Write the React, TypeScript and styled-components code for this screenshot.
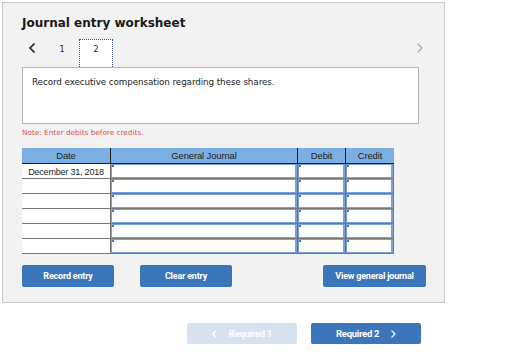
import React from "react";
import styled, { createGlobalStyle } from "styled-components";

const GlobalStyle = createGlobalStyle`
  html, body { margin: 0; padding: 0; background: #ffffff; }
  * { box-sizing: border-box; }
`;

const Page = styled.div`
  padding: 2px 0 0 2px;
  width: 521px;
  height: 364px;
  font-family: "DejaVu Sans", Verdana, sans-serif;
`;

const Panel = styled.div`
  width: 443px;
  height: 301px;
  background: #f2f2f2;
  border: 1px solid #c9c9c9;
  padding: 0 0 0 19px;
  display: flex;
  flex-direction: column;
`;

const Title = styled.h1`
  margin: 12px 0 0 0;
  height: 16px;
  font-size: 12px;
  line-height: 16px;
  font-weight: bold;
  color: #1a1a1a;
`;

const TabsRow = styled.div`
  margin-top: 8px;
  height: 28px;
  display: flex;
  align-items: stretch;
  width: 408px;
`;

const Arrow = styled.div<{ $dim?: boolean }>`
  width: 20px;
  display: flex;
  align-items: flex-start;
  justify-content: center;
  padding-top: 4px;
  color: ${(p) => (p.$dim ? "#a8a8a8" : "#222")};
`;

const Tab = styled.div<{ $active?: boolean; $ml?: number }>`
  width: 34px;
  display: flex;
  justify-content: center;
  padding-top: 5px;
  font-family: "DejaVu Sans", Verdana, sans-serif;
  font-size: 8px;
  color: #222;
  background: ${(p) => (p.$active ? "#ffffff" : "transparent")};
  border: ${(p) => (p.$active ? "1px dotted #37507a" : "1px solid transparent")};
  border-bottom: none;
  margin-left: ${(p) => p.$ml ?? 0}px;
`;

const Spacer = styled.div`
  flex: 1;
`;

const PromptBox = styled.div`
  width: 397px;
  height: 57px;
  background: #ffffff;
  border: 1px solid #b4b4b4;
  padding: 9px 9px;
  font-size: 8.8px;
  color: #222;
  letter-spacing: -0.1px;
`;

const Note = styled.div`
  margin-top: 4px;
  height: 10px;
  font-size: 7.3px;
  line-height: 10px;
  color: #d9534f;
`;

const Table = styled.div`
  margin-top: 10px;
  width: 372px;
  display: flex;
  flex-direction: column;
  font-family: "Liberation Sans", Arial, sans-serif;
  font-size: 9px;
  color: #222;
`;

const HeaderRow = styled.div`
  display: grid;
  grid-template-columns: 88px 187px 48px 49px;
  height: 16px;
  background: #7baee3;
  border-bottom: 1px solid #1e1e1e;
`;

const HeaderCell = styled.div<{ $first?: boolean }>`
  display: flex;
  align-items: center;
  justify-content: center;
  border-left: ${(p) => (p.$first ? "none" : "1px solid #1e1e1e")};
  font-size: 9.5px;
  letter-spacing: -0.15px;
`;

const Row = styled.div`
  display: grid;
  grid-template-columns: 88px 187px 48px 49px;
  height: 15px;
  border-bottom: 1px solid #777777;
`;

const DateCell = styled.div`
  background: #ffffff;
  display: flex;
  align-items: center;
  justify-content: center;
  letter-spacing: -0.2px;
  padding-top: 1px;
`;

const InputCell = styled.div<{ $last?: boolean }>`
  display: flex;
  border-left: 1px solid #6d6d6d;
  border-right: ${(p) => (p.$last ? "1px solid #777777" : "none")};
  background: #777777;
`;

const Field = styled.div`
  flex: 1;
  position: relative;
  background: #ffffff;
  border: 1px solid #7ba2d8;
  border-right-width: 2px;
`;

const Marker = styled.span`
  position: absolute;
  left: 0;
  top: 0;
  width: 2px;
  height: 2px;
  background: #3b7bcc;
`;

const ButtonRow = styled.div`
  margin-top: 11px;
  width: 404px;
  display: flex;
  align-items: center;
`;

const ActionButton = styled.button<{ $w: number; $ml?: number }>`
  width: ${(p) => p.$w}px;
  height: 22px;
  margin-left: ${(p) => p.$ml ?? 0}px;
  border: none;
  border-radius: 2px;
  background: #3a76b9;
  color: #ffffff;
  font-family: Roboto, "Liberation Sans", Arial, sans-serif;
  font-weight: bold;
  font-size: 9px;
  letter-spacing: -0.2px;
  padding: 0 0 1px 0;
  cursor: pointer;
`;

const NavRow = styled.div`
  margin-top: 20px;
  padding-left: 185px;
  display: flex;
  gap: 14px;
`;

const NavButton = styled.button<{ $disabled?: boolean }>`
  width: 110px;
  height: 21px;
  border: none;
  border-radius: 2px;
  background: ${(p) => (p.$disabled ? "#d6e2f0" : "#3a76b9")};
  color: #ffffff;
  font-family: Roboto, "Liberation Sans", Arial, sans-serif;
  font-weight: bold;
  font-size: 9.5px;
  letter-spacing: -0.3px;
  display: flex;
  align-items: center;
  justify-content: center;
  gap: 12px;
  padding: 0;
`;

const Chevron = ({ dir, size = 10, stroke = 1.6 }: { dir: "left" | "right"; size?: number; stroke?: number }) => (
  <svg width={size * 0.6} height={size} viewBox="0 0 6 10" fill="none">
    <path
      d={dir === "left" ? "M5 1 L1 5 L5 9" : "M1 1 L5 5 L1 9"}
      stroke="currentColor"
      strokeWidth={stroke}
      strokeLinecap="round"
      strokeLinejoin="round"
    />
  </svg>
);

const rows = ["December 31, 2018", "", "", "", "", ""];

export default function App() {
  return (
    <Page>
      <GlobalStyle />
      <Panel>
        <Title>Journal entry worksheet</Title>
        <TabsRow>
          <Arrow>
            <Chevron dir="left" size={10} stroke={1.7} />
          </Arrow>
          <Tab $ml={3}>1</Tab>
          <Tab $active>2</Tab>
          <Spacer />
          <Arrow $dim>
            <Chevron dir="right" size={10} stroke={1.1} />
          </Arrow>
        </TabsRow>
        <PromptBox>Record executive compensation regarding these shares.</PromptBox>
        <Note>Note: Enter debits before credits.</Note>
        <Table>
          <HeaderRow>
            <HeaderCell $first>Date</HeaderCell>
            <HeaderCell>General Journal</HeaderCell>
            <HeaderCell>Debit</HeaderCell>
            <HeaderCell>Credit</HeaderCell>
          </HeaderRow>
          {rows.map((d, i) => (
            <Row key={i}>
              <DateCell>{d}</DateCell>
              <InputCell>
                <Field>
                  <Marker />
                </Field>
              </InputCell>
              <InputCell>
                <Field>
                  <Marker />
                </Field>
              </InputCell>
              <InputCell $last>
                <Field>
                  <Marker />
                </Field>
              </InputCell>
            </Row>
          ))}
        </Table>
        <ButtonRow>
          <ActionButton $w={92}>Record entry</ActionButton>
          <ActionButton $w={92} $ml={26}>Clear entry</ActionButton>
          <Spacer />
          <ActionButton $w={103}>View general journal</ActionButton>
        </ButtonRow>
      </Panel>
      <NavRow>
        <NavButton $disabled>
          <Chevron dir="left" size={8} stroke={1.5} />
          <span>Required 1</span>
        </NavButton>
        <NavButton>
          <span>Required 2</span>
          <Chevron dir="right" size={8} stroke={1.5} />
        </NavButton>
      </NavRow>
    </Page>
  );
}
